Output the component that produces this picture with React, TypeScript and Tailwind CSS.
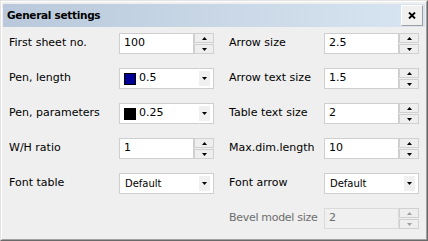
const FONT = "font-['DejaVu_Sans',sans-serif]";

function Arrow({ up, disabled }: { up?: boolean; disabled?: boolean }) {
  return (
    <svg width="5" height="3" viewBox="0 0 5 3" className="block">
      <polygon
        points={up ? "2.5,0 5,3 0,3" : "0,0 5,0 2.5,3"}
        fill={disabled ? "#a0a0a0" : "#000"}
      />
    </svg>
  );
}

function Spin({ value, disabled }: { value: string; disabled?: boolean }) {
  return (
    <div className="flex h-[21px] w-[95px]">
      <div
        className={
          "flex h-full w-[75px] items-center border pl-[4px] text-[11px] " +
          (disabled
            ? "border-[#dadada] bg-[#f0f0f0] text-[#6d6d6d]"
            : "border-[#cfcfcf] bg-white text-black")
        }
      >
        {value}
      </div>
      <div className="flex w-[20px] flex-col gap-px">
        <div className="flex h-[10px] items-center justify-center border border-[#d0d0d0] bg-[#eeeeee]">
          <Arrow up disabled={disabled} />
        </div>
        <div className="flex h-[10px] items-center justify-center border border-[#d0d0d0] bg-[#eeeeee]">
          <Arrow disabled={disabled} />
        </div>
      </div>
    </div>
  );
}

function Combo({ children }: { children: React.ReactNode }) {
  return (
    <div className="flex h-[21px] w-[95px] items-center border border-[#cfcfcf] bg-white p-[2px]">
      <div className="flex flex-1 items-center">{children}</div>
      <div className="mr-[1px] flex h-full w-[11px] items-center justify-center bg-[#f0f0f0]">
        <svg width="5" height="3" viewBox="0 0 5 3" className="block">
          <polygon points="0,0 5,0 2.5,3" fill="#000" />
        </svg>
      </div>
    </div>
  );
}

function PenCombo({ color, value }: { color: string; value: string }) {
  return (
    <Combo>
      <span className="ml-[2px] h-[12px] w-[12px] border border-black" style={{ background: color }} />
      <span className="ml-[3px] text-[11px] text-black">{value}</span>
    </Combo>
  );
}

function FontCombo() {
  return (
    <Combo>
      <span className="ml-[3px] text-[10px] text-black">Default</span>
    </Combo>
  );
}

function Label({ text }: { text: string }) {
  return <div className="w-[110px] text-[11px] text-black">{text}</div>;
}

function RightLabel({ text, disabled }: { text: string; disabled?: boolean }) {
  return (
    <div className={"w-[95px] text-[11px] " + (disabled ? "tracking-[-0.3px] text-[#6d6d6d]" : "text-black")}>{text}</div>
  );
}

export default function App() {
  return (
    <div className={"h-[241px] w-[428px] border border-t-[#e3e3e3] border-l-[#e3e3e3] border-b-[#696969] border-r-[#696969] " + FONT}>
      <div className="flex h-full flex-col border border-t-white border-l-white border-b-[#a0a0a0] border-r-[#a0a0a0] bg-[#efefef]">
        {/* title bar */}
        <div className="mx-px mt-[2px] flex h-[23px] items-center justify-between bg-gradient-to-r from-[#b9c9db] to-[#d8e5f1] pl-[4px] pr-[2px]">
          <span className="text-[10.5px] font-bold tracking-[-0.3px] text-black">General settings</span>
          <div className="flex h-[21px] w-[22px] items-center justify-center border border-t-white border-l-white border-b-[#a0a0a0] border-r-[#a0a0a0] bg-[#f0f0f0]">
            <svg width="8" height="7" viewBox="0 0 8 7" className="block">
              <path d="M1 0.5 L7 6.5 M7 0.5 L1 6.5" stroke="#000" strokeWidth="1.8" />
            </svg>
          </div>
        </div>

        <div className="mt-[6px] flex flex-col gap-[14px] pl-[7px]">
          <div className="flex h-[21px] items-center">
            <Label text="First sheet no." />
            <Spin value="100" />
            <div className="w-[15px]" />
            <RightLabel text="Arrow size" />
            <Spin value="2.5" />
          </div>
          <div className="flex h-[21px] items-center">
            <Label text="Pen, length" />
            <PenCombo color="#000096" value="0.5" />
            <div className="w-[15px]" />
            <RightLabel text="Arrow text size" />
            <Spin value="1.5" />
          </div>
          <div className="flex h-[21px] items-center">
            <Label text="Pen, parameters" />
            <PenCombo color="#000000" value="0.25" />
            <div className="w-[15px]" />
            <RightLabel text="Table text size" />
            <Spin value="2" />
          </div>
          <div className="flex h-[21px] items-center">
            <Label text="W/H ratio" />
            <Spin value="1" />
            <div className="w-[15px]" />
            <RightLabel text="Max.dim.length" />
            <Spin value="10" />
          </div>
          <div className="flex h-[21px] items-center">
            <Label text="Font table" />
            <FontCombo />
            <div className="w-[15px]" />
            <RightLabel text="Font arrow" />
            <FontCombo />
          </div>
          <div className="flex h-[21px] items-center">
            <div className="w-[110px]" />
            <div className="w-[95px]" />
            <div className="w-[15px]" />
            <RightLabel text="Bevel model size" disabled />
            <Spin value="2" disabled />
          </div>
        </div>
      </div>
    </div>
  );
}
